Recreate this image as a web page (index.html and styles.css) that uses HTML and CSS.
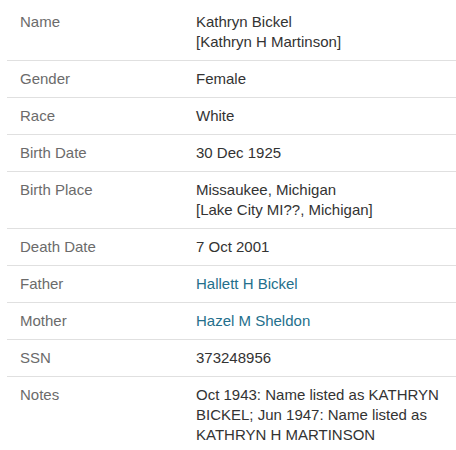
FILE: index.html
```html
<!DOCTYPE html>
<html>
<head>
<meta charset="utf-8">
<link rel="stylesheet" href="styles.css">
</head>
<body>
<div class="facts">
  <div class="row"><div class="label">Name</div><div class="value">Kathryn Bickel<br>[Kathryn H Martinson]</div></div>
  <div class="row"><div class="label">Gender</div><div class="value">Female</div></div>
  <div class="row"><div class="label">Race</div><div class="value">White</div></div>
  <div class="row"><div class="label">Birth Date</div><div class="value">30 Dec 1925</div></div>
  <div class="row"><div class="label">Birth Place</div><div class="value">Missaukee, Michigan<br>[Lake City MI??, Michigan]</div></div>
  <div class="row"><div class="label">Death Date</div><div class="value">7 Oct 2001</div></div>
  <div class="row"><div class="label">Father</div><div class="value"><a class="link" href="#">Hallett H Bickel</a></div></div>
  <div class="row"><div class="label">Mother</div><div class="value"><a class="link" href="#">Hazel M Sheldon</a></div></div>
  <div class="row"><div class="label">SSN</div><div class="value">373248956</div></div>
  <div class="row last"><div class="label">Notes</div><div class="value">Oct 1943: Name listed as KATHRYN BICKEL; Jun 1947: Name listed as KATHRYN H MARTINSON</div></div>
</div>
</body>
</html>
```

FILE: styles.css
```css
html, body {
  margin: 0;
  padding: 0;
  background: #fff;
}
body {
  font-family: "Liberation Sans", Arial, sans-serif;
  font-size: 15px;
  line-height: 20px;
}
.facts {
  margin-left: 7px;
  padding-top: 4px;
}
.row {
  display: grid;
  grid-template-columns: 176px 1fr;
  border-bottom: 1px solid #e0e0e0;
}
.row.last {
  border-bottom: none;
}
.label, .value {
  padding: 8px 13px 8px 13px;
}
.label {
  color: #6b6b6b;
}
.value {
  color: #333;
}
.link {
  color: #246f8c;
  text-decoration: none;
}
```
